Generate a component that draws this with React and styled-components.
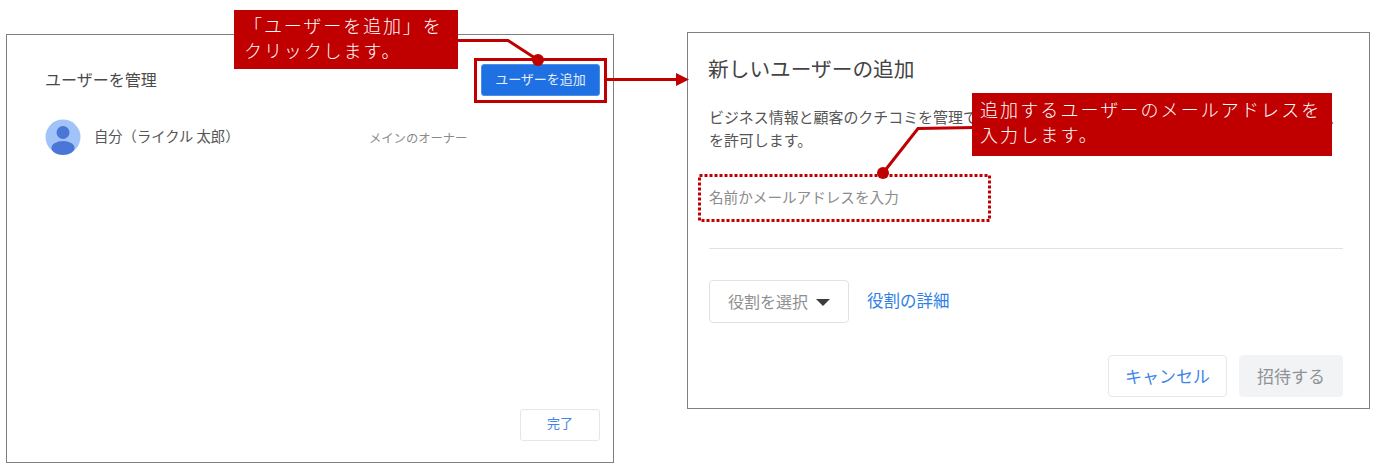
import React from "react";
import styled, { createGlobalStyle } from "styled-components";

const Global = createGlobalStyle`
  html, body { margin: 0; padding: 0; background: #fff; overflow: hidden; }
  * { box-sizing: border-box; }
  body { font-family: "Noto Sans CJK JP", "Noto Sans", sans-serif; }
`;

const Canvas = styled.div`
  position: relative;
  width: 1375px;
  height: 469px;
  display: flex;
  align-items: flex-start;
  padding: 32px 5px 0 6px;
  gap: 73px;
`;

const Panel = styled.section`
  flex: none;
  width: ${(p) => p.$w}px;
  height: ${(p) => p.$h}px;
  margin-top: ${(p) => p.$top || 0}px;
  border: 1px solid #808080;
  background: #fff;
  display: flex;
  flex-direction: column;
`;

const ManageHeader = styled.div`
  display: flex;
  align-items: center;
  justify-content: space-between;
  padding: 29px 13px 0 38px;
`;

const ManageTitle = styled.h2`
  margin: 0;
  font-size: 16px;
  line-height: 30px;
  height: 32px;
  font-weight: 400;
  color: #4a4a4a;
`;

const PrimaryButton = styled.button`
  width: 119px;
  height: 32px;
  border: 1px solid #4a90ea;
  border-radius: 3px;
  background: #1f71e3;
  color: #e4eefc;
  font: 400 13px/26px "Noto Sans CJK JP", sans-serif;
  padding: 0 0 3px;
`;

const UserRow = styled.div`
  display: flex;
  align-items: center;
  margin-top: 23px;
  padding-left: 38px;
`;

const Avatar = styled.svg`
  width: 36px;
  height: 36px;
  flex: none;
`;

const UserName = styled.span`
  margin-left: 13px;
  width: 275px;
  flex: none;
  font-size: 14.3px;
  line-height: 20px;
  color: #555;
  transform: translateY(-1px);
`;

const UserRole = styled.span`
  font-size: 12.3px;
  line-height: 20px;
  color: #8a8a8a;
  transform: translateY(1px);
`;

const PanelFooter = styled.div`
  margin-top: auto;
  display: flex;
  justify-content: flex-end;
  padding: 0 13px 21px 0;
`;

const DoneButton = styled.button`
  width: 80px;
  height: 32px;
  border: 1px solid #e4e6ea;
  border-radius: 3px;
  background: #fff;
  color: #4285e8;
  font: 400 13px/26px "Noto Sans CJK JP", sans-serif;
  padding: 0 0 4px;
`;

const AddBody = styled.div`
  display: flex;
  flex-direction: column;
  height: 100%;
  padding: 19px 26px 11px 20px;
`;

const AddTitle = styled.h2`
  margin: 0;
  font-size: 20.7px;
  line-height: 32px;
  font-weight: 400;
  color: #444;
`;

const Description = styled.p`
  margin: 21px 0 0 1px;
  width: 634px;
  font-size: 14.95px;
  line-height: 23px;
  height: 46px;
  color: #555;
`;

const EmailField = styled.div`
  margin: 35px 0 0 1px;
  height: 22px;
  font-size: 14.6px;
  line-height: 22px;
  color: #8c8c8c;
`;

const Divider = styled.hr`
  margin: 40px 0 0 1px;
  border: 0;
  border-top: 1px solid #dfe1e5;
`;

const RoleRow = styled.div`
  display: flex;
  align-items: center;
  gap: 18px;
  margin: 31px 0 0 1px;
`;

const RoleSelect = styled.div`
  width: 140px;
  height: 43px;
  border: 1px solid #e0e2e6;
  border-radius: 4px;
  display: flex;
  align-items: center;
  justify-content: center;
  gap: 8px;
  font-size: 16px;
  line-height: 24px;
  padding-bottom: 2px;
  color: #8f8f8f;
`;

const Caret = styled.span`
  width: 0;
  height: 0;
  border-left: 7px solid transparent;
  border-right: 7px solid transparent;
  border-top: 7px solid #3c3c3c;
  margin-top: 3px;
`;

const RoleLink = styled.a`
  font-size: 16.5px;
  line-height: 24px;
  padding-bottom: 3px;
  color: #2f7fe6;
`;

const Actions = styled.div`
  margin-top: auto;
  display: flex;
  justify-content: flex-end;
  gap: 12px;
`;

const ActionButton = styled.button`
  width: ${(p) => p.$w}px;
  height: 42px;
  border-radius: 4px;
  border: 1px solid ${(p) => (p.$disabled ? "#f1f3f4" : "#e4e6ea")};
  background: ${(p) => (p.$disabled ? "#f1f3f4" : "#fff")};
  color: ${(p) => (p.$disabled ? "#8f9296" : "#3f86ea")};
  font: 400 17px "Noto Sans CJK JP", sans-serif;
  padding: 0 0 2px;
`;

const Callout = styled.div`
  position: absolute;
  left: ${(p) => p.$x}px;
  top: ${(p) => p.$y}px;
  width: ${(p) => p.$w}px;
  height: ${(p) => p.$h}px;
  padding: ${(p) => p.$pad};
  background: #c00000;
  color: #fff;
  font-size: 18px;
  font-weight: 300;
  line-height: 25px;
  letter-spacing: ${(p) => p.$ls}px;
  white-space: pre;
`;

const Highlight = styled.div`
  position: absolute;
  left: ${(p) => p.$x}px;
  top: ${(p) => p.$y}px;
  width: ${(p) => p.$w}px;
  height: ${(p) => p.$h}px;
  border: 3px solid #c00000;
`;

const Overlay = styled.svg`
  position: absolute;
  left: 0;
  top: 0;
  width: 1375px;
  height: 469px;
  pointer-events: none;
`;

export default function App() {
  return (
    <>
      <Global />
      <Canvas>
        <Panel $w={608} $h={429} $top={2}>
          <ManageHeader>
            <ManageTitle>ユーザーを管理</ManageTitle>
            <PrimaryButton>ユーザーを追加</PrimaryButton>
          </ManageHeader>
          <UserRow>
            <Avatar viewBox="0 0 36 36">
              <circle cx="18" cy="18" r="17.5" fill="#a1c3fa" />
              <circle cx="18" cy="13.5" r="6.5" fill="#4a76d8" />
              <ellipse cx="18" cy="29" rx="11.5" ry="7" fill="#4a76d8" />
            </Avatar>
            <UserName>自分（ライクル 太郎）</UserName>
            <UserRole>メインのオーナー</UserRole>
          </UserRow>
          <PanelFooter>
            <DoneButton>完了</DoneButton>
          </PanelFooter>
        </Panel>
        <Panel $w={683} $h={377}>
          <AddBody>
            <AddTitle>新しいユーザーの追加</AddTitle>
            <Description>
              ビジネス情報と顧客のクチコミを管理できるように、このユーザーに管理者権限でのアクセスを許可します。
            </Description>
            <EmailField>名前かメールアドレスを入力</EmailField>
            <Divider />
            <RoleRow>
              <RoleSelect>
                役割を選択
                <Caret />
              </RoleSelect>
              <RoleLink>役割の詳細</RoleLink>
            </RoleRow>
            <Actions>
              <ActionButton $w={119}>キャンセル</ActionButton>
              <ActionButton $w={104} $disabled>
                招待する
              </ActionButton>
            </Actions>
          </AddBody>
        </Panel>
        <Highlight $x={474} $y={58} $w={133} $h={45} />
        <Overlay viewBox="0 0 1375 469">
          <rect x="699.5" y="175.5" width="290" height="45" fill="none" stroke="#c00000" strokeWidth="3" strokeDasharray="3 2" />
          <polyline points="455,40.5 508,40.5 538,60" fill="none" stroke="#c00000" strokeWidth="3" />
          <circle cx="538" cy="60" r="6" fill="#c00000" />
          <line x1="607" y1="79.5" x2="678" y2="79.5" stroke="#c00000" strokeWidth="3" />
          <polygon points="676,73 689,79.5 676,86" fill="#c00000" />
          <polyline points="975,127.5 918,128.5 883,173" fill="none" stroke="#c00000" strokeWidth="3" />
          <circle cx="883" cy="173" r="6" fill="#c00000" />
        </Overlay>
        <Callout $x={234} $y={10} $w={224} $h={59} $pad="3px 0 0 10px" $ls={1.9}>
          {"「ユーザーを追加」を\nクリックします。"}
        </Callout>
        <Callout $x={972} $y={93} $w={360} $h={63} $pad="4px 0 0 8px" $ls={2.1}>
          {"追加するユーザーのメールアドレスを\n入力します。"}
        </Callout>
      </Canvas>
    </>
  );
}
